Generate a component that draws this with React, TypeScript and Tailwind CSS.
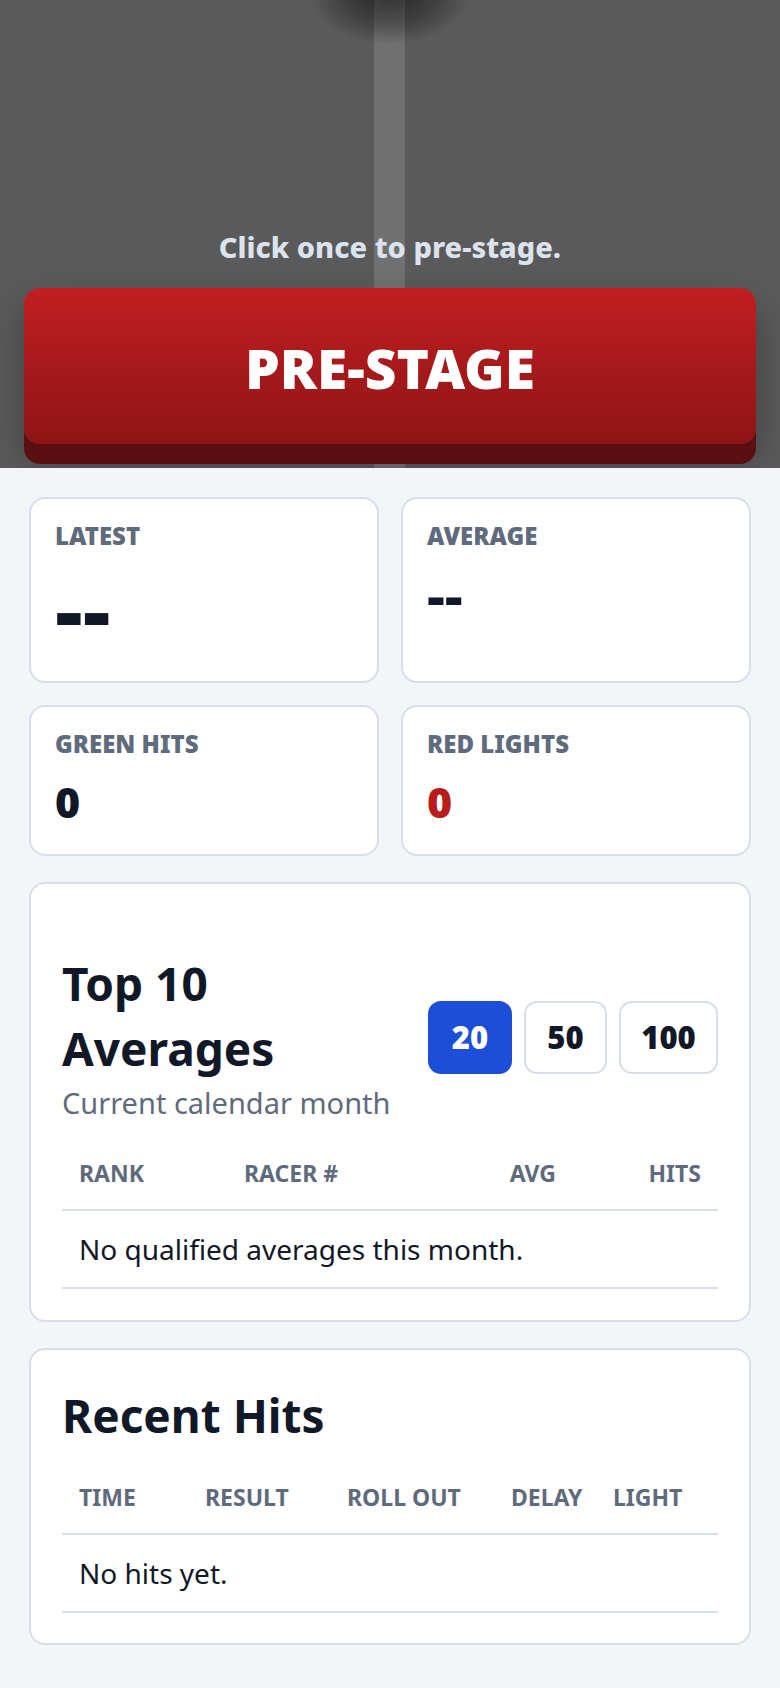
export default function App() {
  return (
    <div className="min-h-[1688px] bg-[#f3f5f9] font-['Noto_Sans','Open_Sans',sans-serif] text-[#111827]">
      {/* Top staging area */}
      <div className="relative h-[468px] overflow-hidden bg-[#5a5a5a] px-[24px] flex flex-col">
        <div className="absolute left-[374px] top-0 h-full w-[31px] bg-[#707070]" />
        <div className="absolute left-[310px] top-[-55px] h-[100px] w-[160px] rounded-full bg-[radial-gradient(ellipse_at_center,rgba(0,0,0,0.55)_0%,rgba(0,0,0,0.3)_40%,rgba(0,0,0,0)_70%)]" />
        <p className="relative mt-[224px] text-center text-[29px] leading-[45px] font-extrabold text-[#dde3ee]">
          Click once to pre-stage.
        </p>
        <button className="relative mt-[19px] h-[156px] w-full rounded-[16px] bg-gradient-to-b from-[#c21f21] to-[#8e1416] pt-[4px] text-[55px] font-black text-white shadow-[0_20px_0_#5c0f10,0_18px_36px_rgba(0,0,0,0.28)]">
          PRE-STAGE
        </button>
      </div>

      <div className="px-[29px] pt-[29px] pb-[45px]">
        {/* Stats */}
        <div className="grid grid-cols-2 gap-[22px]">
          <div className="rounded-[16px] border-2 border-[#d8dee9] bg-white px-[24px] pt-[21px] pb-[31px]">
            <div className="text-[24px] leading-[32px] font-black uppercase text-[#5f6b7c]">Latest</div>
            <div className="mt-[17px] text-[87px] leading-[81px] font-extrabold">--</div>
          </div>
          <div className="rounded-[16px] border-2 border-[#d8dee9] bg-white px-[24px] pt-[21px] pb-[31px]">
            <div className="text-[24px] leading-[32px] font-black uppercase text-[#5f6b7c]">Average</div>
            <div className="mt-[14px] text-[56px] leading-[56px] font-extrabold">--</div>
          </div>
          <div className="rounded-[16px] border-2 border-[#d8dee9] bg-white px-[24px] pt-[21px] pb-[31px]">
            <div className="text-[24px] leading-[32px] font-black uppercase text-[#5f6b7c]">Green Hits</div>
            <div className="mt-[20px] text-[43px] leading-[43px] font-black">0</div>
          </div>
          <div className="rounded-[16px] border-2 border-[#d8dee9] bg-white px-[24px] pt-[21px] pb-[31px]">
            <div className="text-[24px] leading-[32px] font-black uppercase text-[#5f6b7c]">Red Lights</div>
            <div className="mt-[20px] text-[43px] leading-[43px] font-black text-[#b91c1c]">0</div>
          </div>
        </div>

        {/* Top 10 Averages */}
        <div className="mt-[26px] rounded-[16px] border-2 border-[#d8dee9] bg-white px-[31px] pt-[67px] pb-[31px]">
          <div className="flex items-center justify-between">
            <div className="w-[340px]">
              <h2 className="text-[46px] leading-[65px] font-bold">Top 10<br />Averages</h2>
              <p className="text-[29px] leading-[43px] text-[#5f6b7c]">Current calendar month</p>
            </div>
            <div className="flex gap-[12px]">
              <button className="h-[73px] w-[84px] rounded-[13px] border-2 border-[#1d4ed8] bg-[#1d4ed8] text-[31px] font-black text-white">20</button>
              <button className="h-[73px] w-[83px] rounded-[13px] border-2 border-[#d8dee9] bg-white text-[31px] font-black text-[#111827]">50</button>
              <button className="h-[73px] w-[99px] rounded-[13px] border-2 border-[#d8dee9] bg-white text-[31px] font-black text-[#111827]">100</button>
            </div>
          </div>
          <div className="mt-[13px]">
            <div className="grid grid-cols-[165px_226px_120px_145px] border-b-2 border-[#d8dee9] text-[23px] leading-[34px] font-bold uppercase text-[#5f6b7c]">
              <div className="px-[17px] py-[19px]">Rank</div>
              <div className="px-[17px] py-[19px]">Racer #</div>
              <div className="px-[17px] py-[19px] text-right">Avg</div>
              <div className="px-[17px] py-[19px] text-right">Hits</div>
            </div>
            <div className="border-b-2 border-[#d8dee9] px-[17px] py-[18px] text-[28px] leading-[40px] font-normal">
              No qualified averages this month.
            </div>
          </div>
        </div>

        {/* Recent Hits */}
        <div className="mt-[26px] rounded-[16px] border-2 border-[#d8dee9] bg-white px-[31px] pt-[33px] pb-[30px]">
          <h2 className="text-[46px] leading-[65px] font-bold">Recent Hits</h2>
          <div className="mt-[13px]">
            <div className="grid grid-cols-[126px_142px_164px_102px_1fr] border-b-2 border-[#d8dee9] text-[23px] leading-[34px] font-bold uppercase text-[#5f6b7c]">
              <div className="px-[17px] py-[19px]">Time</div>
              <div className="px-[17px] py-[19px]">Result</div>
              <div className="px-[17px] py-[19px]">Roll Out</div>
              <div className="px-[17px] py-[19px]">Delay</div>
              <div className="px-[17px] py-[19px]">Light</div>
            </div>
            <div className="border-b-2 border-[#d8dee9] px-[17px] py-[18px] text-[28px] leading-[40px] font-normal">
              No hits yet.
            </div>
          </div>
        </div>
      </div>
    </div>
  );
}
